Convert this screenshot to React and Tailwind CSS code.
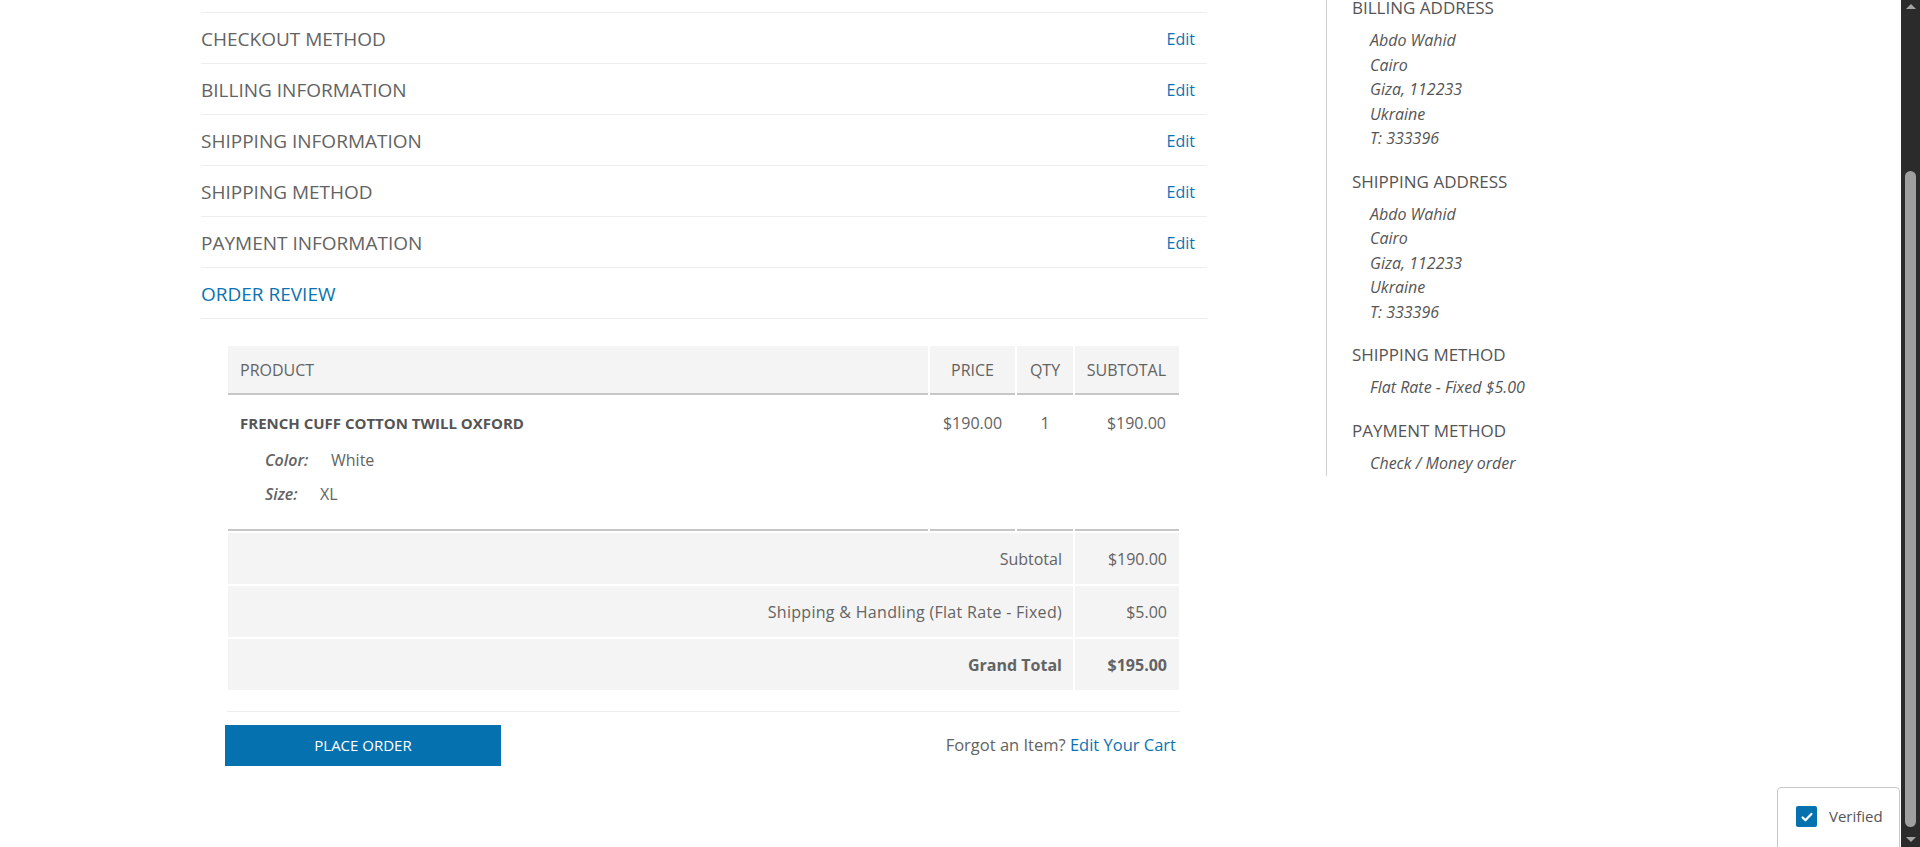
import React from "react";

const steps = [
  "CHECKOUT METHOD",
  "BILLING INFORMATION",
  "SHIPPING INFORMATION",
  "SHIPPING METHOD",
  "PAYMENT INFORMATION",
];

const address = ["Abdo Wahid", "Cairo", "Giza, 112233", "Ukraine", "T: 333396"];

function StepRow({ title }) {
  return (
    <div className="flex h-[51px] items-center justify-between border-t border-[#ededed] pr-[12px]">
      <h2 className="mt-px text-[19px] leading-[24px] text-[#636363]">{title}</h2>
      <a className="mt-px text-[16px] text-[#0b73b3]" href="#">
        Edit
      </a>
    </div>
  );
}

function OrderTable() {
  return (
    <table className="w-[955px] border-separate border-spacing-0.5 text-[16px] text-[#636363]">
      <thead>
        <tr className="bg-[#f4f4f4]">
          <th className="border-b-2 border-[#c6c6c6] pb-[11px] pl-[12px] pt-[13px] text-left font-normal leading-[23px]">
            PRODUCT
          </th>
          <th className="w-[85px] border-b-2 border-[#c6c6c6] pb-[11px] pt-[13px] text-center font-normal leading-[23px]">
            PRICE
          </th>
          <th className="w-[56px] border-b-2 border-[#c6c6c6] pb-[11px] pt-[13px] text-center font-normal leading-[23px]">
            QTY
          </th>
          <th className="w-[104px] border-b-2 border-[#c6c6c6] pb-[11px] pr-[13px] pt-[13px] text-right font-normal leading-[23px]">
            SUBTOTAL
          </th>
        </tr>
      </thead>
      <tbody>
        <tr className="align-top">
          <td className="border-b-2 border-[#c6c6c6] pb-[23px] pl-[12px] pt-[16px]">
            <h3 className="text-[15px] font-bold leading-[21px] text-[#555]">
              FRENCH CUFF COTTON TWILL OXFORD
            </h3>
            <dl className="pl-[25px]">
              <div className="mt-[14px] flex leading-[24px]">
                <dt className="w-[66px] font-semibold italic">Color:</dt>
                <dd>White</dd>
              </div>
              <div className="mt-[10px] flex leading-[24px]">
                <dt className="w-[55px] font-semibold italic">Size:</dt>
                <dd>XL</dd>
              </div>
            </dl>
          </td>
          <td className="border-b-2 border-[#c6c6c6] pt-[14px] text-center leading-[24px]">$190.00</td>
          <td className="border-b-2 border-[#c6c6c6] pt-[14px] text-center leading-[24px]">1</td>
          <td className="border-b-2 border-[#c6c6c6] pr-[13px] pt-[14px] text-right leading-[24px]">
            $190.00
          </td>
        </tr>
      </tbody>
      <tfoot>
        <tr className="bg-[#f4f4f4]">
          <td colSpan={3} className="pb-[12px] pr-[11px] pt-[14px] text-right leading-[25px]">
            Subtotal
          </td>
          <td className="pb-[12px] pr-[12px] pt-[14px] text-right leading-[25px]">$190.00</td>
        </tr>
        <tr className="bg-[#f4f4f4]">
          <td colSpan={3} className="pb-[12px] pr-[11px] pt-[14px] text-right leading-[25px] tracking-[0.3px]">
            Shipping &amp; Handling (Flat Rate - Fixed)
          </td>
          <td className="pb-[12px] pr-[12px] pt-[14px] text-right leading-[25px]">$5.00</td>
        </tr>
        <tr className="bg-[#f4f4f4] font-bold">
          <td colSpan={3} className="pb-[12px] pr-[11px] pt-[14px] text-right leading-[25px]">
            Grand Total
          </td>
          <td className="pb-[12px] pr-[12px] pt-[14px] text-right leading-[25px]">$195.00</td>
        </tr>
      </tfoot>
    </table>
  );
}

function SideBlock({ title, lines, className }) {
  return (
    <div className={className}>
      <h3 className="text-[17px] leading-[24px] text-[#555]">{title}</h3>
      <div className="mt-[8px] pl-[18px] text-[16px] italic leading-[24.5px] text-[#555]">
        {lines.map((l) => (
          <div key={l}>{l}</div>
        ))}
      </div>
    </div>
  );
}

function Scrollbar() {
  return (
    <div className="flex w-[19px] flex-col items-center bg-[#2b2b2b]">
      <div className="mt-[4px] h-0 w-0 border-x-[5px] border-b-[5px] border-x-transparent border-b-[#a3a3a3]" />
      <div className="mt-[162px] h-[656px] w-[11px] rounded-full bg-[#9f9f9f]" />
      <div className="mt-auto mb-[5px] h-0 w-0 border-x-[5px] border-t-[5px] border-x-transparent border-t-[#a3a3a3]" />
    </div>
  );
}

export default function App() {
  return (
    <div className="relative flex h-[847px] overflow-hidden bg-white font-['Open_Sans',sans-serif] text-[#636363]">
      <div className="flex flex-1 pl-[201px]">
        <section className="w-[1006px] pt-[12px]">
          {steps.map((s) => (
            <StepRow key={s} title={s} />
          ))}
          <div className="flex h-[52px] items-center border-y border-[#ededed]">
            <h2 className="mt-px text-[19px] leading-[24px] text-[#0b73b3]">ORDER REVIEW</h2>
          </div>
          <div className="ml-[24px] w-[957px] pt-[25px]">
            <div className="pl-px">
              <OrderTable />
            </div>
            <div className="mt-[19px] ml-[2px] mr-[2px] border-t border-[#ededed]" />
            <div className="mt-[13px] flex items-center justify-between pr-[6px]">
              <button className="h-[41px] w-[276px] bg-[#0571ae] text-[15px] text-white">
                PLACE ORDER
              </button>
              <p className="text-[16.5px] text-[#636363]">
                Forgot an Item?{" "}
                <a className="text-[#0b73b3]" href="#">
                  Edit Your Cart
                </a>
              </p>
            </div>
          </div>
        </section>

        <aside className="ml-[119px] h-[476px] w-[360px] border-l border-[#d0d0d0] pl-[25px]">
          <div className="-mt-[4px]">
            <SideBlock title="BILLING ADDRESS" lines={address} />
            <SideBlock className="mt-[19px]" title="SHIPPING ADDRESS" lines={address} />
            <SideBlock className="mt-[19px]" title="SHIPPING METHOD" lines={["Flat Rate - Fixed $5.00"]} />
            <SideBlock className="mt-[19px]" title="PAYMENT METHOD" lines={["Check / Money order"]} />
          </div>
        </aside>
      </div>

      <Scrollbar />

      <div className="absolute left-[1777px] top-[787px] flex h-[72px] w-[123px] items-start rounded-[4px] border border-[#c8c8c8] bg-white pl-[18px] pt-[18px]">
        <span className="flex h-[21px] w-[21px] items-center justify-center rounded-[2px] bg-[#0571ae]">
          <svg viewBox="0 0 16 16" className="h-[14px] w-[14px]" fill="none" stroke="white" strokeWidth="2.6" strokeLinecap="round" strokeLinejoin="round">
            <path d="M3 8.5l3.2 3.2L13 4.5" />
          </svg>
        </span>
        <span className="ml-[12px] text-[15px] leading-[21px] text-[#555]">Verified</span>
      </div>
    </div>
  );
}
